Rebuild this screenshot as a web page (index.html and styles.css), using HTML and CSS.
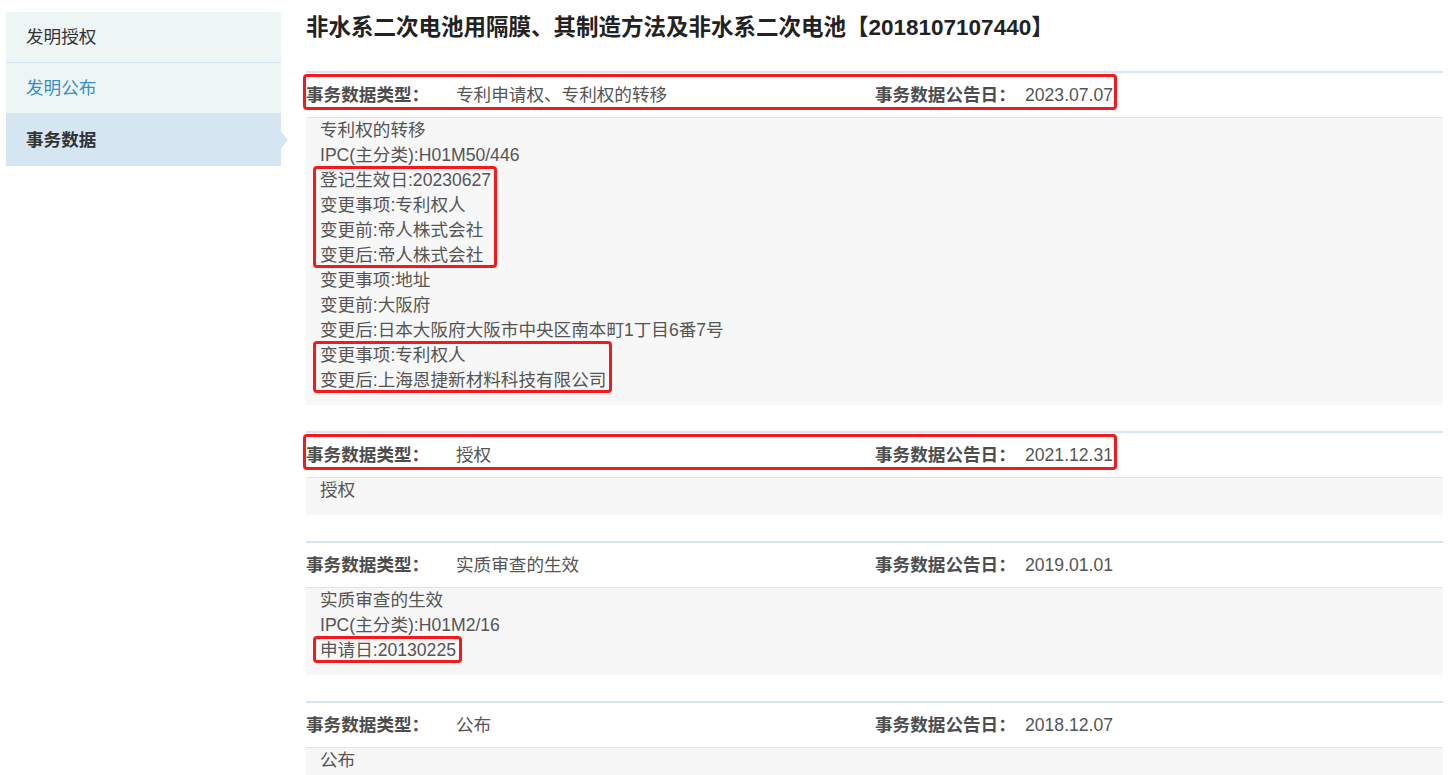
FILE: index.html
```html
<!DOCTYPE html>
<html>

<head>
    <title>事务数据</title>
    <link rel="stylesheet" href="styles.css">
</head>

<body>
    <div class="page">
        <div class="side-nav">
            <a class="nav-item">发明授权</a>
            <a class="nav-item link">发明公布</a>
            <a class="nav-item active">事务数据</a>
        </div>

        <div class="main">
            <h1 class="title">非水系二次电池用隔膜、其制造方法及非水系二次电池【2018107107440】</h1>

            <div class="tx">
                <div class="tx-head marked">
                    <span class="tx-label">事务数据类型：</span>
                    <span class="tx-type">专利申请权、专利权的转移</span>
                    <span class="tx-label">事务数据公告日：</span>
                    <span class="tx-date">2023.07.07</span>
                </div>
                <div class="tx-body">
                    <div>专利权的转移</div>
                    <div>IPC(主分类):H01M50/446</div>
                    <div class="mark">
                        <div>登记生效日:20230627</div>
                        <div>变更事项:专利权人</div>
                        <div>变更前:帝人株式会社</div>
                        <div>变更后:帝人株式会社</div>
                    </div>
                    <div>变更事项:地址</div>
                    <div>变更前:大阪府</div>
                    <div>变更后:日本大阪府大阪市中央区南本町1丁目6番7号</div>
                    <div class="mark">
                        <div>变更事项:专利权人</div>
                        <div>变更后:上海恩捷新材料科技有限公司</div>
                    </div>
                </div>
            </div>

            <div class="tx">
                <div class="tx-head marked">
                    <span class="tx-label">事务数据类型：</span>
                    <span class="tx-type">授权</span>
                    <span class="tx-label">事务数据公告日：</span>
                    <span class="tx-date">2021.12.31</span>
                </div>
                <div class="tx-body">
                    <div>授权</div>
                </div>
            </div>

            <div class="tx">
                <div class="tx-head">
                    <span class="tx-label">事务数据类型：</span>
                    <span class="tx-type">实质审查的生效</span>
                    <span class="tx-label">事务数据公告日：</span>
                    <span class="tx-date">2019.01.01</span>
                </div>
                <div class="tx-body">
                    <div>实质审查的生效</div>
                    <div>IPC(主分类):H01M2/16</div>
                    <div class="mark">
                        <div>申请日:20130225</div>
                    </div>
                </div>
            </div>

            <div class="tx">
                <div class="tx-head">
                    <span class="tx-label">事务数据类型：</span>
                    <span class="tx-type">公布</span>
                    <span class="tx-label">事务数据公告日：</span>
                    <span class="tx-date">2018.12.07</span>
                </div>
                <div class="tx-body">
                    <div>公布</div>
                </div>
            </div>
        </div>
    </div>
</body>

</html>
```

FILE: styles.css
```css
body {
    margin: 0;
    font-family: "Liberation Sans", "Noto Sans CJK SC", sans-serif;
    font-size: 17.6px;
    color: #555555;
    background: #ffffff;
}

.page {
    display: flex;
    gap: 25px;
    padding: 12px 7px 0 6px;
}

/* left menu */
.side-nav {
    width: 275px;
    flex-shrink: 0;
    align-self: flex-start;
    background: #edf6f5;
}

.nav-item {
    position: relative;
    display: block;
    height: 50px;
    line-height: 50px;
    padding-left: 20px;
    color: #333333;
    border-bottom: 1px solid #d4e6f1;
}

.nav-item.link {
    color: #3a8cc6;
}

.nav-item.active {
    background: #d5e6f2;
    font-weight: bold;
    border-bottom: none;
    height: 52px;
    line-height: 52px;
}

.nav-item.active::after {
    content: "";
    position: absolute;
    right: -7px;
    top: 18px;
    border-left: 7px solid #d5e6f2;
    border-top: 8px solid transparent;
    border-bottom: 8px solid transparent;
}

/* content */
.main {
    flex: 1;
    min-width: 0;
}

.title {
    margin: 1px 0 28px;
    font-size: 22.5px;
    line-height: 30px;
    color: #222222;
}

.tx {
    border-top: 2px solid #d6e6f0;
    margin-bottom: 26px;
}

.tx-head {
    position: relative;
    display: flex;
    height: 44px;
    line-height: 44px;
    border-bottom: 1px solid #d9e6ef;
}

.tx-head.marked::after {
    content: "";
    position: absolute;
    left: -3px;
    top: 1px;
    width: 814px;
    height: 36px;
    border: 3px solid #f4191c;
    border-radius: 4px;
    box-sizing: border-box;
}

.tx-label {
    width: 150px;
    flex-shrink: 0;
    font-weight: bold;
    color: #4d4d4d;
}

.tx-type {
    width: 419px;
    flex-shrink: 0;
}

.tx-body {
    background: #f7f7f7;
    padding: 0 0 12px 14px;
    line-height: 25px;
}

.mark {
    width: fit-content;
    margin-left: -7px;
    margin-top: -2px;
    padding: 2px 6px 0 7px;
    outline: 3px solid #f4191c;
    outline-offset: -3px;
    border-radius: 4px;
}
```
